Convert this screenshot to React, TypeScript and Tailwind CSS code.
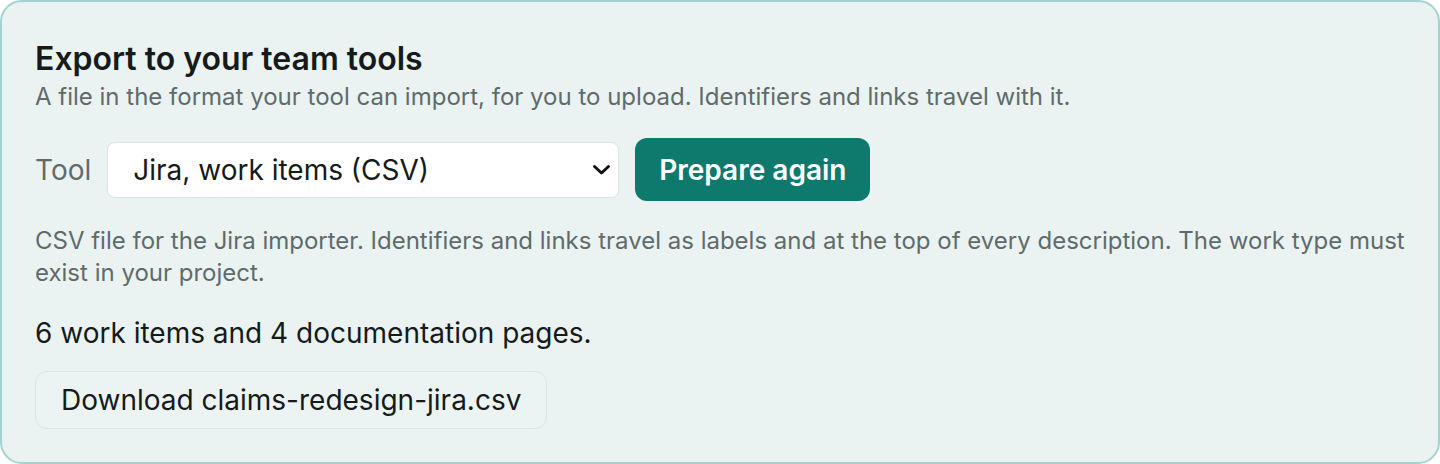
import React from "react";

export default function App() {
  return (
    <div className="w-[1440px] h-[464px] bg-white" style={{ fontFamily: "Inter, 'Noto Sans', sans-serif" }}>
      <div className="box-border h-[464px] w-[1440px] rounded-[22px] border-2 border-[#a3d3ce] bg-[#eaf3f2] px-[33px] pt-[37px] pb-[33px]">
        <h2 className="text-[32px] leading-[40px] font-semibold text-[#161a1a]">Export to your team tools</h2>
        <p className="mt-[2px] text-[24px] leading-[32px] text-[#5f6b6a]">
          A file in the format your tool can import, for you to upload. Identifiers and links travel with it.
        </p>
        <div className="mt-[25px] flex items-center gap-[16px]">
          <span className="text-[28px] leading-[36px] text-[#5f6b6a]">Tool</span>
          <div className="relative">
            <select
              defaultValue="jira"
              className="box-border h-[56px] w-[512px] appearance-none rounded-[8px] border border-[#dbe5e4] bg-white pl-[25px] pr-[40px] text-[28px] text-[#161a1a] outline-none"
              style={{ fontFamily: "Inter, sans-serif" }}
            >
              <option value="jira">Jira, work items (CSV)</option>
            </select>
            <svg
              className="pointer-events-none absolute right-[8px] top-1/2 -translate-y-1/2"
              width="19"
              height="12"
              viewBox="0 0 19 12"
              fill="none"
            >
              <path d="M2.5 2.5 9.5 9 16.5 2.5" stroke="#111" strokeWidth="3" strokeLinecap="round" strokeLinejoin="round" />
            </svg>
          </div>
          <button className="h-[63px] rounded-[12px] bg-[#0e7a6e] px-[24px] text-[28px] font-semibold text-white">
            Prepare again
          </button>
        </div>
        <p className="mt-[24px] text-[24px] leading-[32px] text-[#5f6b6a]">
          CSV file for the Jira importer. Identifiers and links travel as labels and at the top of every description. The work type must exist in your project.
        </p>
        <p className="mt-[26px] text-[28px] leading-[36px] text-[#161a1a]">6 work items and 4 documentation pages.</p>
        <button className="mt-[20px] h-[58px] rounded-[12px] border border-[#dbe5e4] bg-[#ecf4f3] px-[25px] text-[28px] text-[#161a1a]">
          Download claims-redesign-jira.csv
        </button>
      </div>
    </div>
  );
}
